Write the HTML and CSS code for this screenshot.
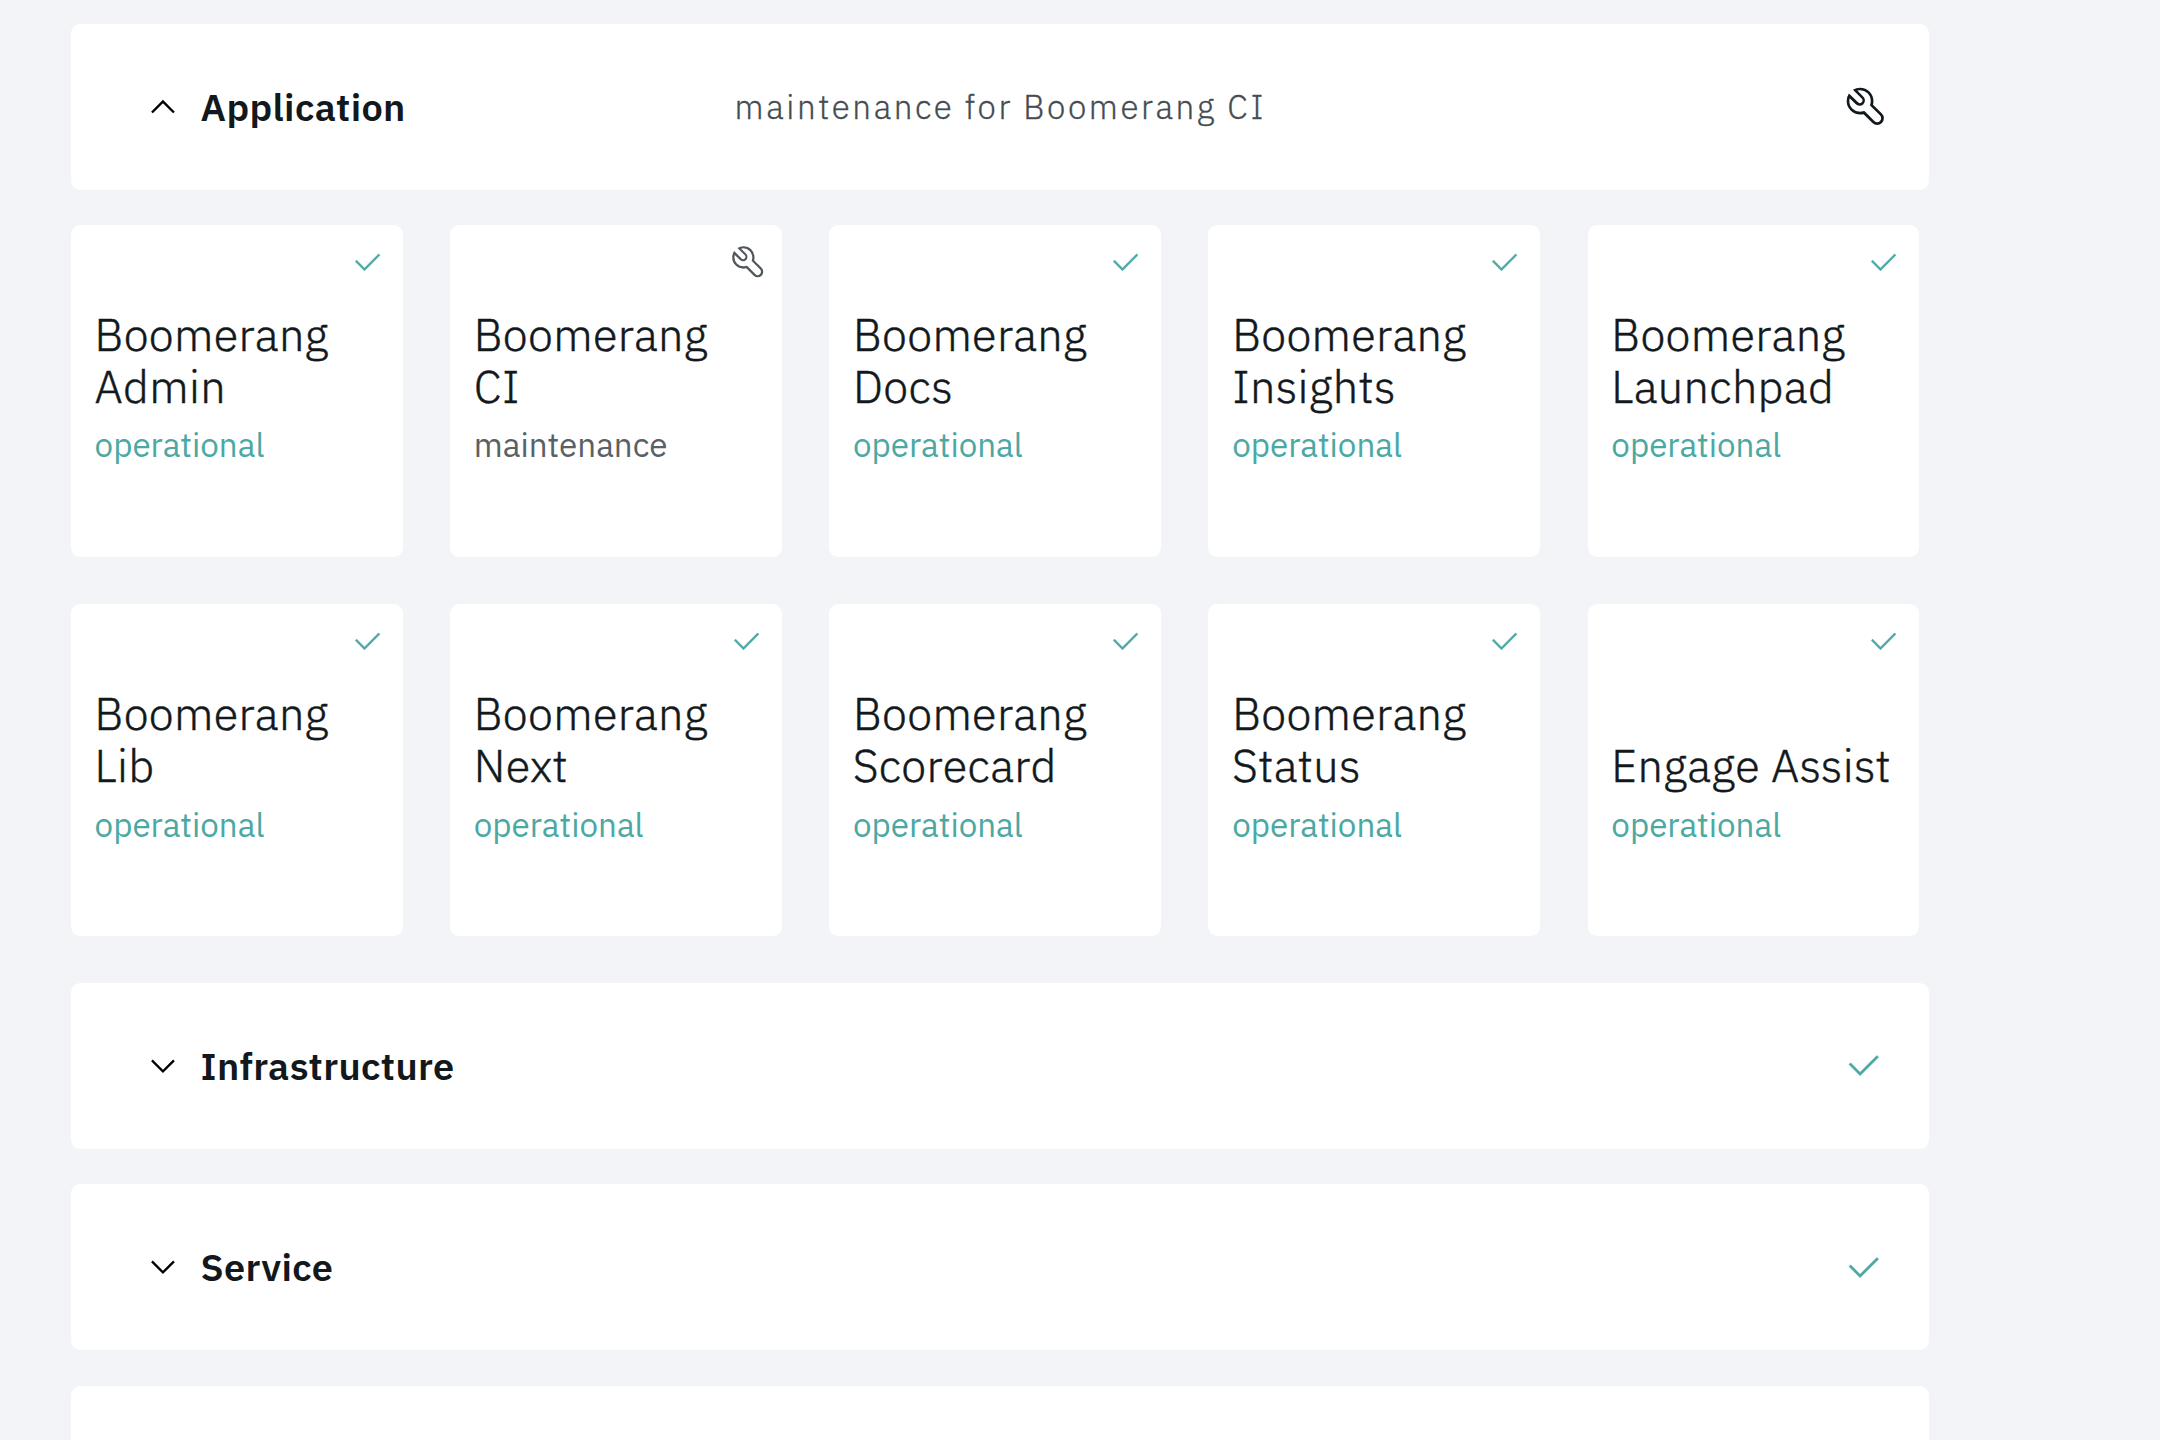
FILE: index.html
```html
<!DOCTYPE html>
<html lang="en">
<head>
<meta charset="utf-8">
<title>Boomerang Status</title>
<link rel="stylesheet" href="styles.css">
</head>
<body>
<svg class="sprite" aria-hidden="true">
  <symbol id="check" viewBox="0 0 32 32"><path d="M13 24L4 15l1.414-1.414L13 21.171 26.586 7.586 28 9z"/></symbol>
  <symbol id="up" viewBox="0 0 32 32"><path d="M16 10l10 10-1.4 1.4-8.6-8.6-8.6 8.6L6 20z"/></symbol>
  <symbol id="down" viewBox="0 0 32 32"><path d="M16 22L6 12l1.4-1.4 8.6 8.6 8.6-8.6L26 12z"/></symbol>
  <symbol id="wrench" viewBox="0 0 32 32"><path d="M12.1 2a9.8 9.8 0 00-5.4 1.6l6.4 6.4a2.1 2.1 0 01.2 3 2.1 2.1 0 01-3-.2L3.7 6.4A9.84 9.84 0 002 12.1 10.14 10.14 0 0012.1 22.2a10.9 10.9 0 002.6-.3l6.7 6.7a5 5 0 007.1-7.1l-6.7-6.7a10.9 10.9 0 00.3-2.6A10 10 0 0012.1 2zm8 10.1a7.61 7.61 0 01-.3 2.1l-.3 1.1.8.8 6.7 6.7a2.88 2.88 0 01.9 2.1A2.72 2.72 0 0127 27a2.9 2.9 0 01-4.2 0l-6.7-6.7-.8-.8-1.1.3a7.61 7.61 0 01-2.1.3 8.27 8.27 0 01-5.7-2.3A7.63 7.63 0 014 12.1a8.33 8.33 0 01.3-2.2l4.4 4.4a4.14 4.14 0 005.9.2 4.14 4.14 0 00-.2-5.9L10 4.2a6.45 6.45 0 012-.3 8.27 8.27 0 015.7 2.3 8.49 8.49 0 012.4 5.9z"/></symbol>
</svg>
<main class="page">
  <section class="bar">
    <svg class="chevron"><use href="#up"/></svg>
    <h2 class="bar-title">Application</h2>
    <p class="bar-note">maintenance for Boomerang CI</p>
    <svg class="bar-icon bar-icon-wrench"><use href="#wrench"/></svg>
  </section>
  <div class="cards">
    <article class="card"><svg class="card-icon"><use href="#check"/></svg><h3 class="name">Boomerang<br>Admin</h3><p class="status">operational</p></article>
    <article class="card"><svg class="card-icon card-icon-wrench"><use href="#wrench"/></svg><h3 class="name">Boomerang<br>CI</h3><p class="status status-maintenance">maintenance</p></article>
    <article class="card"><svg class="card-icon"><use href="#check"/></svg><h3 class="name">Boomerang<br>Docs</h3><p class="status">operational</p></article>
    <article class="card"><svg class="card-icon"><use href="#check"/></svg><h3 class="name">Boomerang<br>Insights</h3><p class="status">operational</p></article>
    <article class="card"><svg class="card-icon"><use href="#check"/></svg><h3 class="name">Boomerang<br>Launchpad</h3><p class="status">operational</p></article>
    <article class="card"><svg class="card-icon"><use href="#check"/></svg><h3 class="name">Boomerang<br>Lib</h3><p class="status">operational</p></article>
    <article class="card"><svg class="card-icon"><use href="#check"/></svg><h3 class="name">Boomerang<br>Next</h3><p class="status">operational</p></article>
    <article class="card"><svg class="card-icon"><use href="#check"/></svg><h3 class="name">Boomerang<br>Scorecard</h3><p class="status">operational</p></article>
    <article class="card"><svg class="card-icon"><use href="#check"/></svg><h3 class="name">Boomerang<br>Status</h3><p class="status">operational</p></article>
    <article class="card"><svg class="card-icon"><use href="#check"/></svg><h3 class="name">Engage Assist</h3><p class="status">operational</p></article>
  </div>
  <section class="bar">
    <svg class="chevron"><use href="#down"/></svg>
    <h2 class="bar-title">Infrastructure</h2>
    <svg class="bar-icon"><use href="#check"/></svg>
  </section>
  <section class="bar">
    <svg class="chevron"><use href="#down"/></svg>
    <h2 class="bar-title">Service</h2>
    <svg class="bar-icon"><use href="#check"/></svg>
  </section>
  <section class="bar bar-last"></section>
</main>
</body>
</html>
```
FILE: styles.css
```css
* { box-sizing: border-box; }
body {
  margin: 0;
  background: #f2f4f8;
  color: #12181b;
  font-family: "IBM Plex Sans", "Noto Sans", "Open Sans", sans-serif;
}
h2, h3, p { margin: 0; }
.sprite { display: none; }
.page {
  display: flex;
  flex-direction: column;
  width: 1929.2px;
  height: 1440px;
  padding: 23.7px 0 0 70.9px;
}

.bar {
  display: flex;
  flex: none;
  align-items: center;
  height: 165.9px;
  margin-bottom: 35.4px;
  padding: 0 45.3px 0 73.3px;
  border-radius: 9.5px;
  background: #fff;
}
.bar-last { flex: 1; height: auto; margin: 0; border-radius: 9.5px 9.5px 0 0; }
.chevron { flex: none; width: 37.9px; height: 37.9px; margin-right: 18.5px; fill: #000; }
.bar-title { width: 534px; font-size: 37.92px; font-weight: 600; line-height: 48px; letter-spacing: 0.36px; }
.bar-note { font-size: 33.18px; font-weight: 300; line-height: 40px; letter-spacing: 2.59px; color: #454c51; -webkit-text-stroke: 0.3px; }
.bar-icon { flex: none; width: 39.6px; height: 39.6px; margin-left: auto; fill: #4ba8a3; stroke: #4ba8a3; stroke-width: 0.3px; }
.bar-icon-wrench { width: 42.6px; height: 42.6px; margin-right: -2.8px; fill: #12181b; stroke: none; }

.cards {
  display: grid;
  flex: none;
  grid-template-columns: repeat(5, 331.8px);
  gap: 47.4px;
  margin-bottom: 47.2px;
}
.card {
  position: relative;
  display: flex;
  flex-direction: column;
  justify-content: flex-end;
  gap: 13.2px;
  height: 331.8px;
  padding: 0 0 91.4px 23.7px;
  border-radius: 9.5px;
  background: #fff;
}
.card-icon { position: absolute; top: 20.6px; right: 19px; width: 33.2px; height: 33.2px; fill: #4ba8a3; stroke: #4ba8a3; stroke-width: 0.3px; }
.card-icon-wrench { top: 19.2px; right: 16.6px; width: 35.5px; height: 35.5px; fill: #50575c; stroke: none; }
.name { font-size: 45.03px; font-weight: 300; line-height: 52px; letter-spacing: 0.34px; white-space: nowrap; -webkit-text-stroke: 0.45px; }
.status { font-size: 33.18px; font-weight: 400; line-height: 40px; color: #4ba8a3; }
.status-maintenance { color: #596166; }
```
